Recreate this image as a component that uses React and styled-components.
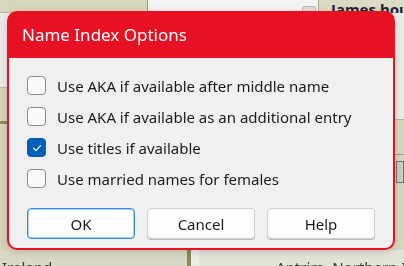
import React from 'react';
import styled, { createGlobalStyle } from 'styled-components';

const GlobalStyle = createGlobalStyle`
  html, body {
    margin: 0;
    padding: 0;
    background: #d6d4bc;
  }
  * {
    box-sizing: border-box;
  }
`;

const options = [
  { label: 'Use AKA if available after middle name', checked: false },
  { label: 'Use AKA if available as an additional entry', checked: false },
  { label: 'Use titles if available', checked: true },
  { label: 'Use married names for females', checked: false },
];

const CheckIcon = () => (
  <svg width="12" height="12" viewBox="0 0 12 12">
    <path d="M2.5 6.3 L5 8.6 L9.6 3.6" fill="none" stroke="#fff" strokeWidth="1.2" strokeLinecap="round" strokeLinejoin="round" />
  </svg>
);

const App = () => {
  return (
    <Screen>
      <GlobalStyle />
      <Backdrop>
        <TopBar>
          <HeaderCell />
          <BlankCell>
            <Grip />
          </BlankCell>
          <NameCell>James hou</NameCell>
        </TopBar>
        <Middle>
          <LeftPane>
            <LightBlock />
            <ListRow>
              <RowText>e</RowText>
            </ListRow>
            <OliveRule />
          </LeftPane>
          <RightPane>
            <LightBlock>
              <RowText>ne</RowText>
            </LightBlock>
            <FieldRow>
              <SmallBox />
            </FieldRow>
          </RightPane>
        </Middle>
        <BottomBar>
          <BottomLeft>Ireland</BottomLeft>
          <BottomRule />
          <BottomRight>Antrim, Northern Ireland</BottomRight>
        </BottomBar>
      </Backdrop>

      <Dialog>
        <TitleBar>Name Index Options</TitleBar>
        <Body>
          <OptionList>
            {options.map(opt => (
              <Option key={opt.label}>
                <Box checked={opt.checked}>{opt.checked && <CheckIcon />}</Box>
                <OptionLabel>{opt.label}</OptionLabel>
              </Option>
            ))}
          </OptionList>
          <Buttons>
            <Button primary>OK</Button>
            <Button>Cancel</Button>
            <Button>Help</Button>
          </Buttons>
        </Body>
      </Dialog>
    </Screen>
  );
};

export default App;

const Screen = styled.div`
  position: relative;
  width: 404px;
  height: 266px;
  overflow: hidden;
  font-family: 'Noto Sans', 'Open Sans', sans-serif;
`;

const Backdrop = styled.div`
  display: flex;
  flex-direction: column;
  height: 100%;
  filter: blur(0.4px);
`;

const TopBar = styled.div`
  display: flex;
  height: 13px;
`;

const HeaderCell = styled.div`
  width: 148px;
  background: #d8d6bd;
  border-right: 1px solid #9c9a80;
  border-bottom: 1px solid #b5b39c;
`;

const BlankCell = styled.div`
  flex: 1;
  display: flex;
  justify-content: flex-end;
  align-items: flex-end;
  background: #f3f3f1;
  border-bottom: 1px solid #d0d0cc;
`;

const Grip = styled.div`
  width: 14px;
  height: 6px;
  margin-right: 2px;
  background: #dcdcd8;
  border: 1px solid #b8b8b4;
  border-bottom: none;
  border-radius: 3px 3px 0 0;
`;

const NameCell = styled.div`
  width: 86px;
  padding-left: 12px;
  background: #dcdac4;
  border-left: 1px solid #a9a78f;
  color: #1c2438;
  font-weight: 700;
  font-size: 15px;
  line-height: 13px;
  padding-top: 3px;
  overflow: hidden;
  white-space: nowrap;
`;

const Middle = styled.div`
  flex: 1;
  display: flex;
  justify-content: space-between;
`;

const LeftPane = styled.div`
  width: 190px;
  display: flex;
  flex-direction: column;
  background: #d6d4bd;
  border-right: 3px solid #8d8a55;
`;

const LightBlock = styled.div`
  height: 74px;
  background: #ebebe8;
  color: #8a8a80;
  font-size: 15px;
  display: flex;
  align-items: flex-end;
  padding-left: 2px;
`;

const ListRow = styled.div`
  height: 34px;
  border-top: 1px solid #b9b79e;
  display: flex;
  align-items: center;
  justify-content: flex-end;
  padding-right: 4px;
`;

const RowText = styled.span`
  color: #6d6c5c;
  font-size: 15px;
  line-height: 20px;
`;

const OliveRule = styled.div`
  height: 3px;
  background: #8d8a5f;
`;

const RightPane = styled.div`
  width: 200px;
  display: flex;
  flex-direction: column;
  background: #d8d6c0;

  ${LightBlock} {
    height: 107px;
    padding-bottom: 20px;
    border-bottom: 1px solid #b6b49c;
  }
`;

const FieldRow = styled.div`
  height: 34px;
  margin-top: 34px;
  border-top: 1px solid #9e9c82;
  display: flex;
  justify-content: flex-end;
  align-items: center;
`;

const SmallBox = styled.div`
  width: 8px;
  height: 22px;
  background: #c8cfc0;
  border: 1px solid #6f7a6a;
`;

const BottomBar = styled.div`
  display: flex;
  height: 16px;
  font-size: 15px;
  color: #3a3a30;
`;

const BottomLeft = styled.div`
  width: 187px;
  padding: 8px 0 0 2px;
  background: #d9d8c4;
  line-height: 18px;
  overflow: hidden;
`;

const BottomRule = styled.div`
  width: 12px;
  background: #ececea;
  border-left: 4px solid #8d8a55;
`;

const BottomRight = styled.div`
  flex: 1;
  padding: 8px 0 0 77px;
  background: #e4e3d8;
  line-height: 18px;
  overflow: hidden;
  white-space: nowrap;
`;

const Dialog = styled.div`
  position: absolute;
  left: 7px;
  top: 11px;
  width: 388px;
  height: 239px;
  display: flex;
  flex-direction: column;
  background: #e81123;
  border-radius: 10px;
  padding: 0 2px 2px;
  box-shadow: 0 2px 8px rgba(0, 0, 0, 0.15);
`;

const TitleBar = styled.div`
  height: 47px;
  padding: 13px 0 0 13px;
  color: #ffffff;
  font-size: 17px;
  line-height: 22px;
`;

const Body = styled.div`
  flex: 1;
  display: flex;
  flex-direction: column;
  background: #f0f0f0;
  border-radius: 0 0 8px 8px;
  padding: 18px 17px 0 18px;
`;

const OptionList = styled.div`
  display: flex;
  flex-direction: column;
  gap: 12px;
`;

const Option = styled.label`
  display: flex;
  align-items: center;
  gap: 11px;
  height: 19px;
`;

const Box = styled.span`
  width: 19px;
  height: 19px;
  flex-shrink: 0;
  display: flex;
  align-items: center;
  justify-content: center;
  border-radius: 4px;
  background: ${props => (props.checked ? '#005fb8' : '#f9f9f9')};
  border: 1px solid ${props => (props.checked ? '#005fb8' : '#8a8a8a')};
`;

const OptionLabel = styled.span`
  font-size: 15px;
  color: #1b1b1b;
  white-space: nowrap;
`;

const Buttons = styled.div`
  display: flex;
  gap: 12px;
  margin-top: 20px;
`;

const Button = styled.button`
  width: 108px;
  height: 31px;
  padding: 0;
  font-family: inherit;
  font-size: 15px;
  color: #1b1b1b;
  background: #fdfdfd;
  border-radius: 4px;
  border: 1px solid ${props => (props.primary ? '#3b8ad6' : '#d0d0d0')};
  box-shadow: ${props => (props.primary ? 'inset 0 0 0 1px #a9cdf0' : '0 1px 0 #bcbcbc')};
`;
